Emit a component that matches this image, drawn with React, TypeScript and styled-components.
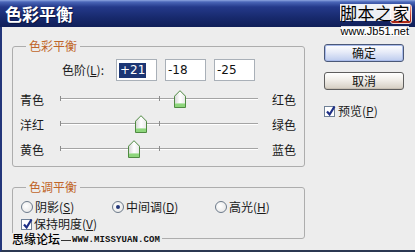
import React, { ReactNode } from 'react'
import styled, { createGlobalStyle } from 'styled-components'

const GlobalStyle = createGlobalStyle`
  html, body {
    margin: 0;
    padding: 0;
    background: #ededed;
  }
  body {
    font-family: "Noto Sans CJK SC", "Liberation Sans", sans-serif;
    font-size: 12px;
    color: #1a1a1a;
  }
`

const CJK = '"Noto Sans CJK SC", "Liberation Sans", sans-serif'

const Window = styled.div`
  position: relative;
  width: 415px;
  height: 252px;
  overflow: hidden;
  display: flex;
  flex-direction: column;
`

const TitleBar = styled.div`
  flex: none;
  height: 27px;
  display: flex;
  align-items: center;
  padding-left: 5px;
  background: linear-gradient(
    to bottom,
    #8ea6e0 0px,
    #4a66b8 2px,
    #24398a 7px,
    #17296c 18px,
    #101f58 27px
  );
`

const Title = styled.span`
  color: #fff;
  font-family: ${CJK};
  font-size: 17px;
  font-weight: 700;
  line-height: 20px;
  text-shadow: 1px 1px 0 #0a1440;
`

const CloseButton = styled.span`
  margin-left: auto;
  margin-right: 3px;
  width: 22px;
  height: 20px;
  box-sizing: border-box;
  border: 1px solid #f4d8d0;
  border-radius: 3px;
  background: linear-gradient(to bottom, #f0a090, #c83c28 60%, #a82414);
`

const Body = styled.div`
  flex: 1;
  display: flex;
  background: #ededed;
  border-left: 2px solid #23367a;
  border-bottom: 2px solid #2b3852;
  padding-left: 10px;
`

const LeftColumn = styled.div`
  width: 293px;
  padding-top: 12px;
`

const RightColumn = styled.div`
  margin-left: 19px;
  padding-top: 17px;
  display: flex;
  flex-direction: column;
  align-items: flex-start;
`

const Group = styled.fieldset<{ $pad: string }>`
  margin: 0;
  min-width: 0;
  padding: ${({ $pad }) => $pad};
  border: 1px solid #adadad;
  border-radius: 3px;
  & + & {
    margin-top: 13px;
  }
`

const Legend = styled.legend`
  margin-left: 6px;
  padding: 0 3px;
  color: #c0652a;
  font-size: 12px;
  line-height: 14px;
`

const LevelRow = styled.div`
  display: flex;
  align-items: center;
  height: 22px;
  margin-left: 42px;
`

const LevelLabel = styled.span`
  width: 54px;
  line-height: 14px;
`

const NumberBox = styled.div`
  width: 41px;
  height: 22px;
  box-sizing: border-box;
  border: 1px solid #a9b0b8;
  background: #fff;
  padding-left: 2px;
  display: flex;
  align-items: center;
  font-family: "DejaVu Sans", "Liberation Sans", sans-serif;
  font-size: 12px;
  color: #111;
  & + & {
    margin-left: 8px;
  }
`

const Selected = styled.span`
  background: #1c3674;
  color: #fff;
  line-height: 15px;
  padding: 0 1px;
`

const SliderList = styled.div`
  margin-top: 6px;
`

const SliderRow = styled.div`
  display: grid;
  grid-template-columns: 40px 198px 1fr;
  height: 25px;
  align-items: center;
`

const SideLabel = styled.span<{ $right?: boolean }>`
  padding-left: ${({ $right }) => ($right ? '14px' : '0')};
  line-height: 14px;
`

const Track = styled.div`
  position: relative;
  height: 25px;
  &::before {
    content: '';
    position: absolute;
    left: 0;
    right: 0;
    top: 11px;
    height: 1px;
    background: #a4a4a4;
  }
  &::after {
    content: '';
    position: absolute;
    left: 0;
    right: 0;
    top: 12px;
    height: 1px;
    background: #ffffff;
  }
`

const Tick = styled.span<{ $at: number }>`
  position: absolute;
  left: ${({ $at }) => $at}px;
  top: 9px;
  width: 1px;
  height: 5px;
  background: #8c8c8c;
  z-index: 1;
`

const Thumb = styled.svg`
  position: absolute;
  top: 3px;
  z-index: 2;
`

const RadioRow = styled.div`
  display: grid;
  grid-template-columns: 91px 103px auto;
  height: 14px;
  align-items: center;
`

const Option = styled.label`
  display: flex;
  align-items: center;
  gap: 2px;
  line-height: 14px;
  padding-left: 1px;
`

const RadioCircle = styled.span<{ $checked?: boolean }>`
  width: 12px;
  height: 12px;
  box-sizing: border-box;
  border-radius: 50%;
  border: 1px solid #6c7a8a;
  background: radial-gradient(circle at 40% 40%, #ffffff, #e2e2e2);
  display: inline-flex;
  align-items: center;
  justify-content: center;
  &::after {
    content: '';
    width: 4px;
    height: 4px;
    border-radius: 50%;
    background: #24387a;
    display: ${({ $checked }) => ($checked ? 'block' : 'none')};
  }
`

const CheckRow = styled.div`
  margin-top: 3px;
  height: 14px;
  display: flex;
  align-items: center;
`

const CheckBox = styled.span<{ $size: number }>`
  position: relative;
  width: ${({ $size }) => $size}px;
  height: ${({ $size }) => $size}px;
  box-sizing: border-box;
  border: 1px solid #6f8096;
  background: #fff;
  flex: none;
  svg {
    position: absolute;
    left: 0;
    top: -3px;
    overflow: visible;
  }
`

const Button = styled.div<{ $primary?: boolean }>`
  width: 80px;
  height: 18px;
  box-sizing: border-box;
  border: 1px solid ${({ $primary }) => ($primary ? '#4a5878' : '#5e5e5e')};
  border-radius: 3px;
  display: flex;
  align-items: center;
  justify-content: center;
  font-size: 12px;
  line-height: 14px;
  color: #111;
  background: ${({ $primary }) =>
    $primary
      ? 'linear-gradient(to bottom, #ffffff 0%, #e6ebf8 45%, #bccbee 100%)'
      : 'linear-gradient(to bottom, #ffffff 0%, #f0ede8 45%, #d4cdc2 100%)'};
  box-shadow: ${({ $primary }) => ($primary ? 'inset 0 0 0 1px #a9bbea' : 'inset 0 -1px 0 #c8c0b4')};
  & + & {
    margin-top: 10px;
  }
`

const PreviewRow = styled.div`
  margin-top: 14px;
  display: flex;
  align-items: center;
  gap: 3px;
  line-height: 14px;
`

const TopMark = styled.div`
  position: absolute;
  top: 4px;
  right: 5px;
  display: flex;
  flex-direction: column;
  align-items: flex-end;
`

const MarkTitle = styled.span`
  font-family: ${CJK};
  font-size: 17px;
  line-height: 17px;
  color: #000;
  background: rgba(255, 255, 255, 0.92);
  letter-spacing: 0.5px;
`

const MarkUrl = styled.span`
  margin-top: 5px;
  margin-right: 1px;
  font-family: "Liberation Sans", sans-serif;
  font-size: 11px;
  line-height: 10px;
  color: #000;
  background: rgba(255, 255, 255, 0.85);
`

const BottomMark = styled.div`
  position: absolute;
  left: 12px;
  top: 233px;
  height: 12px;
  display: flex;
  align-items: center;
  background: #ededed;
  padding-right: 2px;
`

const MarkName = styled.span`
  font-family: ${CJK};
  font-size: 12px;
  font-weight: 500;
  line-height: 12px;
  color: #000;
`

const MarkDash = styled.span`
  width: 10px;
  height: 1px;
  background: #333;
  margin: 3px 1px 0;
`

const MarkSite = styled.span`
  margin-top: 3px;
  font-family: "Liberation Mono", monospace;
  font-size: 9px;
  font-weight: 700;
  line-height: 9px;
  letter-spacing: 0.1px;
  color: #111;
`

function SliderThumb({ value }: { value: number }) {
  const x = 99 + (value / 100) * 99 - 6
  return (
    <Thumb width="12" height="18" viewBox="0 0 12 18" style={{ left: x }}>
      <defs>
        <linearGradient id="thumbFace" x1="0" x2="1" y1="0" y2="0">
          <stop offset="0" stopColor="#d4d4d4" />
          <stop offset="0.5" stopColor="#ffffff" />
          <stop offset="1" stopColor="#e8e8e8" />
        </linearGradient>
      </defs>
      <path d="M0.5 6.2 L6 0.7 L11.5 6.2 V17.5 H0.5 Z" fill="url(#thumbFace)" stroke="#4f8a42" />
      <rect x="1" y="14" width="10" height="3" fill="#8ed67c" />
      <path d="M1 13.5 H11" stroke="#b8e4ae" strokeWidth="1" />
    </Thumb>
  )
}

function Slider({ left, right, value }: { left: string; right: string; value: number }) {
  return (
    <SliderRow>
      <SideLabel>{left}</SideLabel>
      <Track>
        <Tick $at={0} />
        <Tick $at={99} />
        <SliderThumb value={value} />
      </Track>
      <SideLabel $right>{right}</SideLabel>
    </SliderRow>
  )
}

function Check({ size }: { size: number }) {
  return (
    <CheckBox $size={size}>
      <svg width={size} height={size + 3} viewBox={`0 0 ${size} ${size + 3}`}>
        <path d="M2 7.5 L4.6 10.5 L9.5 2.5" fill="none" stroke="#1e2f86" strokeWidth="2.2" />
      </svg>
    </CheckBox>
  )
}

function Radio({ checked, children }: { checked?: boolean; children: ReactNode }) {
  return (
    <Option>
      <RadioCircle $checked={checked} />
      <span>{children}</span>
    </Option>
  )
}

export default function App() {
  return (
    <Window>
      <GlobalStyle />
      <TitleBar>
        <Title>色彩平衡</Title>
        <CloseButton />
      </TitleBar>
      <Body>
        <LeftColumn>
          <Group $pad="6px 7px 4px">
            <Legend>色彩平衡</Legend>
            <LevelRow>
              <LevelLabel>
                色阶(<u>L</u>):
              </LevelLabel>
              <NumberBox>
                <Selected>+21</Selected>
              </NumberBox>
              <NumberBox>-18</NumberBox>
              <NumberBox>-25</NumberBox>
            </LevelRow>
            <SliderList>
              <Slider left="青色" right="红色" value={21} />
              <Slider left="洋红" right="绿色" value={-18} />
              <Slider left="黄色" right="蓝色" value={-25} />
            </SliderList>
          </Group>
          <Group $pad="6px 7px 7px">
            <Legend>色调平衡</Legend>
            <RadioRow>
              <Radio>
                阴影(<u>S</u>)
              </Radio>
              <Radio checked>
                中间调(<u>D</u>)
              </Radio>
              <Radio>
                高光(<u>H</u>)
              </Radio>
            </RadioRow>
            <CheckRow>
              <Option>
                <Check size={11} />
                <span>
                  保持明度(<u>V</u>)
                </span>
              </Option>
            </CheckRow>
          </Group>
        </LeftColumn>
        <RightColumn>
          <Button $primary>确定</Button>
          <Button>取消</Button>
          <PreviewRow>
            <Check size={11} />
            <span>
              预览(<u>P</u>)
            </span>
          </PreviewRow>
        </RightColumn>
      </Body>
      <TopMark>
        <MarkTitle>脚本之家</MarkTitle>
        <MarkUrl>www.Jb51.net</MarkUrl>
      </TopMark>
      <BottomMark>
        <MarkName>思缘论坛</MarkName>
        <MarkDash />
        <MarkSite>WWW.MISSYUAN.COM</MarkSite>
      </BottomMark>
    </Window>
  )
}
